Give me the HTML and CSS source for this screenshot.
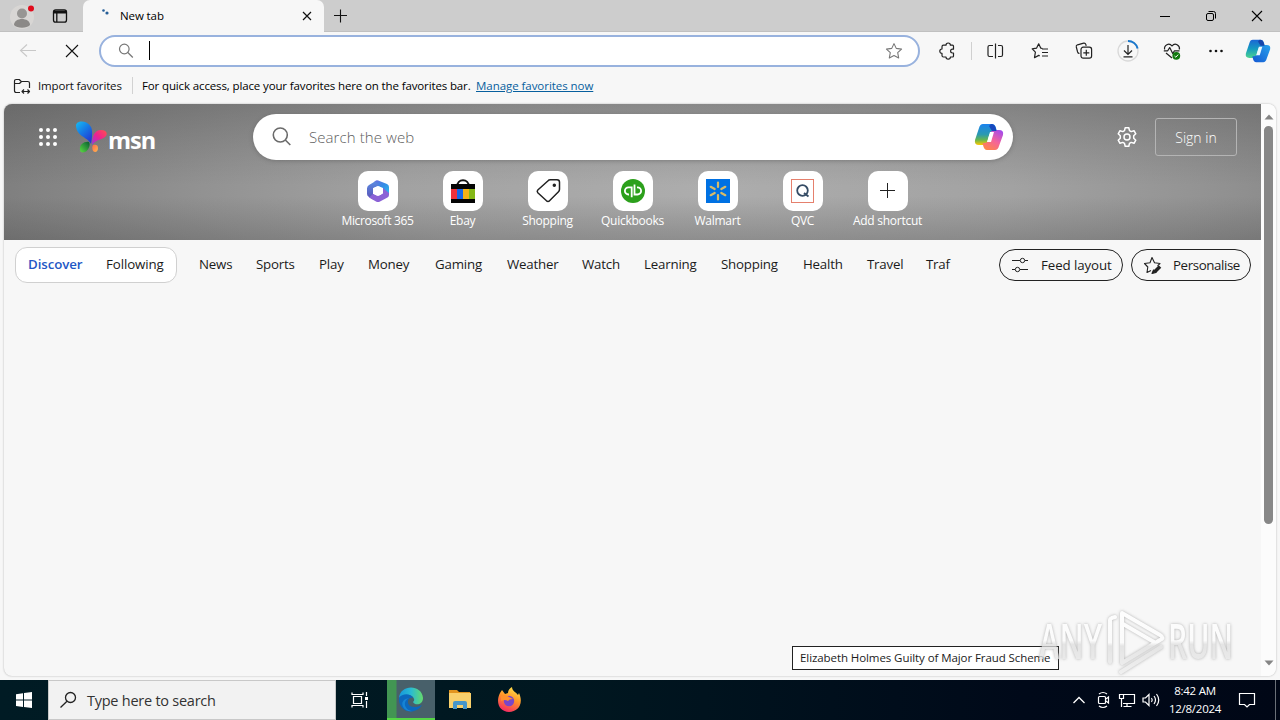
FILE: index.html
```
<!DOCTYPE html>
<html lang="en">
<head>
<meta charset="utf-8">
<title>New tab</title>
<link rel="stylesheet" href="styles.css">
</head>
<body>
<header class="tabstrip">
  <div class="profile"><svg width="30" height="30" viewBox="0 0 30 30"><circle cx="15" cy="16" r="12" fill="#d8d6d4"/><circle cx="15" cy="12.5" r="5" fill="#979593"/><path d="M7 24c0-8 16-8 16 0-3 3.5-13 3.5-16 0z" fill="#8b8987"/><circle cx="24" cy="7.500" r="3" fill="#e00b1c"/></svg></div>
  <div class="workspaces"><svg width="16" height="16" viewBox="0 0 16 16" fill="none" stroke="#111" stroke-width="1.3"><rect x="1.5" y="1.8" width="13" height="12.4" rx="2.2"/><path d="M2 4h12" stroke-width="3"/><path d="M4.8 5v9"/></svg></div>
  <div class="tab">
    <svg class="spinner" width="16" height="16" viewBox="0 0 16 16" fill="#275f98"><circle cx="4.5" cy="2.5" r="1.3"/><circle cx="8" cy="5" r="1.6"/></svg>
    <span class="tab-title">New tab</span>
    <svg class="tab-close" width="16" height="16" viewBox="0 0 16 16" stroke="#111" stroke-width="1.2"><path d="M4 4l8 8M12 4l-8 8"/></svg>
  </div>
  <div class="newtab"><svg width="16" height="16" viewBox="0 0 16 16" stroke="#111" stroke-width="1.1"><path d="M8.500 1.500v13M2 7.500h13"/></svg></div>
  <div class="winctl"><svg width="12" height="12" viewBox="0 0 12 12" stroke="#000"><path d="M1 6.5h10"/></svg></div>
  <div class="winctl"><svg width="12" height="12" viewBox="0 0 12 12" fill="none" stroke="#000"><rect x="1.5" y="3.5" width="7" height="7" rx="1.5"/><path d="M3.5 1.5h5q2 0 2 2v5"/></svg></div>
  <div class="winctl"><svg width="12" height="12" viewBox="0 0 12 12" stroke="#000" stroke-width="1.1"><path d="M1 1l10 10M11 1L1 11"/></svg></div>
</header>

<nav class="toolbar">
  <div class="tool"><svg width="20" height="20" viewBox="0 0 20 20" fill="none" stroke="#c8c8c8" stroke-width="1.1"><path d="M18 9.500H3M9 3.500l-6.500 6L9 15.500"/></svg></div>
  <div class="tool"><svg width="16" height="16" viewBox="0 0 16 16" stroke="#111" stroke-width="1.1"><path d="M2 2l12 12M14 2L2 14"/></svg></div>
  <div class="address">
    <svg width="16" height="16" viewBox="0 0 16 16" fill="none" stroke="#777" stroke-width="1.2"><circle cx="6.3" cy="6" r="4.8"/><path d="M9.8 9.5l5 5"/></svg>
    <span class="caret"></span>
    <svg class="fav-star" width="18" height="18" viewBox="0 0 20 20" fill="none" stroke="#777" stroke-width="1.2" stroke-linejoin="round"><path d="M10 1.8l2.5 5.3 5.9.8-4.3 4 1.1 5.8L10 15l-5.2 2.7 1.1-5.8-4.3-4 5.9-.8z"/></svg>
  </div>
  <div class="tool ext"><svg width="18" height="18" viewBox="0 0 18 18" fill="none" stroke="#222" stroke-width="1.2" stroke-linejoin="round"><path d="M5.500 3.200H8a2.200 2.200 0 0 1 4.400 0h2.100q1 0 1 1v3h-1a1.900 1.900 0 0 0 0 3.800h1v3q0 1-1 1h-2.100a2.200 2.200 0 0 1-4.400 0H5.500q-1.500 0-1.500-1.500v-2.100a2.200 2.200 0 0 1 0-4.400V4.700q0-1.500 1.500-1.500z"/></svg></div>
  <div class="sep"></div>
  <div class="tool"><svg width="18" height="18" viewBox="0 0 18 18" fill="none" stroke="#222" stroke-width="1.2"><path d="M9.500 1.500v15M7 3.500H3.500q-1.500 0-1.500 1.500v8q0 1.500 1.500 1.500H7M12 3.500h3q1.500 0 1.500 1.500v8q0 1.500-1.500 1.500h-3"/></svg></div>
  <div class="tool gap1"><svg width="18" height="18" viewBox="0 0 18 18" fill="none" stroke="#222" stroke-width="1.2" stroke-linejoin="round"><path d="M11.5 6.5L9.8 6.2 7.7 1.8 5.5 6.2l-4.3.7 3.2 3.2-.9 5.6 4.2-2.3 1 .5M11 7h6M11 10.5h6M11 14h6"/></svg></div>
  <div class="tool"><svg width="18" height="18" viewBox="0 0 18 18" fill="none" stroke="#222" stroke-width="1.2"><path d="M4.5 11.5Q3 11.4 2.6 10L1.3 5q-.4-1.700 1.200-2.200l6.200-1.600q1.600-.3 2.100 1.200l.4 1.400"/><rect x="6" y="5.2" width="10.6" height="11" rx="2.2"/><path d="M11.300 7.800v6M8.300 10.800h6"/></svg></div>
  <div class="tool"><svg width="24" height="24" viewBox="0 0 24 24" fill="none"><circle cx="12" cy="12" r="10" stroke="#d9d9d9" stroke-width="1.3"/><path d="M12 2a10 10 0 0 1 9.600 7.400" stroke="#1977cc" stroke-width="2"/><path d="M12 6v9M8 11.500l4 4 4-4M7.500 17.800h9" stroke="#222" stroke-width="1.2"/></svg></div>
  <div class="tool"><svg width="18" height="18" viewBox="0 0 18 18" fill="none" stroke="#222" stroke-width="1.2" stroke-linejoin="round"><path d="M1.600 7.500C.8 3.400 6 .2 9 4c3-3.800 8.200-.6 7.400 3.500M.8 8.800h3.900l2-3.200 3 6 1.800-2.800h5M3 11l6 5"/><circle cx="13.300" cy="13.800" r="3.900" fill="#11790f" stroke="none"/><path d="M11.500 14l1.300 1.200 2.400-2.600" stroke="#fff" stroke-width="1"/></svg></div>
  <div class="tool"><svg width="16" height="16" viewBox="0 0 16 16" fill="#111"><circle cx="2.500" cy="8" r="1.300"/><circle cx="8" cy="8" r="1.300"/><circle cx="13.500" cy="8" r="1.300"/></svg></div>
  <div class="copilot"><svg width="26" height="26" viewBox="0 0 30 30">
    <defs><linearGradient id="a1" x2="0" y2="1"><stop stop-color="#1b66d5"/><stop offset=".5" stop-color="#159bc0"/><stop offset="1" stop-color="#4dd390"/></linearGradient><linearGradient id="a2" x1="1" x2="0" y2="1"><stop stop-color="#27a2ec"/><stop offset="1" stop-color="#1457d2"/></linearGradient></defs>
    <path d="M9 2h9q3 0 4 4l1 4h-4q-3 0-4 4l-2 7q-1 2-3 2H5q-5 0-4-5L5 6q1-4 4-4z" fill="url(#a1)"/><path d="M21 28h-8q-3 0-4-5l-.5-2h2q3 0 4-3l2-7q1-3 4-3H25q5 0 4 5l-4 11q-1 4-4 4z" fill="url(#a2)"/><path d="M17 2q4 0 5 5l.5 2H18l-3-5z" fill="#1745aa"/><path d="M16 10h4l-3 10h-4z" fill="#e9f8ff"/></svg></div>
</nav>

<div class="favbar">
  <svg width="18" height="18" viewBox="0 0 18 18" fill="none" stroke="#222" stroke-width="1.200" stroke-linejoin="round"><path d="M7 15.500H3.200q-1.700 0-1.700-1.700V4.200q0-1.700 1.700-1.700h3l2 2h6.600q1.700 0 1.700 1.700V11M1.500 6.500h5l2-2M9 14.500h7.500M11 12.500l-2 2 2 2M14.500 12.500l2 2-2 2"/></svg>
  <span class="import">Import favorites</span>
  <span class="fsep"></span>
  <span class="hint">For quick access, place your favorites here on the favorites bar.</span>
  <a class="manage">Manage favorites now</a>
</div>

<main class="frame">
  <div class="content">
    <section class="hero">
      <div class="hero-top">
        <svg class="apps" width="24" height="24" viewBox="0 0 24 24" fill="#fff"><circle cx="5" cy="5" r="2"/><circle cx="12" cy="5" r="2"/><circle cx="19" cy="5" r="2"/><circle cx="5" cy="12" r="2"/><circle cx="12" cy="12" r="2"/><circle cx="19" cy="12" r="2"/><circle cx="5" cy="19" r="2"/><circle cx="12" cy="19" r="2"/><circle cx="19" cy="19" r="2"/></svg>
        <div class="msn"><svg width="31" height="32" viewBox="0 0 31 32">
          <defs><linearGradient id="b1" x2=".7" y2="1"><stop stop-color="#16bdf2"/><stop offset=".5" stop-color="#1679e5"/><stop offset="1" stop-color="#2337d2"/></linearGradient><linearGradient id="b2" x1="1" x2="0" y2="1"><stop stop-color="#ff514c"/><stop offset=".5" stop-color="#ee238f"/><stop offset="1" stop-color="#9736df"/></linearGradient><linearGradient id="b3" x1="1" x2="0" y2="1"><stop stop-color="#075b32"/><stop offset="1" stop-color="#5cdc42"/></linearGradient><linearGradient id="b4" x2="1" y2="1"><stop stop-color="#ff6848"/><stop offset="1" stop-color="#ffb94f"/></linearGradient></defs>
          <path d="M0 5C0-1 11-1 15 6c2 4 1 11 0 17C12 16 1 16 0 5z" fill="url(#b1)"/><path d="M16 24c0-8 2-15 9-15 5 0 7 3 5 6-3 4-10 3-14 9z" fill="url(#b2)"/><path d="M4 29c-1-6 5-9 9-8 2 3-1 9-4 10-3 1-5 0-5-2z" fill="url(#b3)"/><path d="M17 24c3-1 5 0 5 3 0 4-3 5-5 3-1-2-1-5 0-6z" fill="url(#b4)"/></svg><span>msn</span></div>
        <div class="search">
          <svg width="24" height="24" viewBox="0 0 24 24" fill="none" stroke="#6b6b6b" stroke-width="1.600"><circle cx="10.300" cy="10" r="7"/><path d="M15.300 15l5 5"/></svg>
          <span class="search-text">Search the web</span>
          <svg class="search-copilot" width="32" height="30" viewBox="0 0 30 30">
            <defs><linearGradient id="c1" x2="0" y2="1"><stop stop-color="#1b83ef"/><stop offset=".5" stop-color="#2b9ab0"/><stop offset=".75" stop-color="#65b651"/><stop offset="1" stop-color="#ffc800"/></linearGradient><linearGradient id="c2" x1=".8" x2=".2" y2="1"><stop stop-color="#a64bea"/><stop offset=".5" stop-color="#f4649a"/><stop offset="1" stop-color="#ff8746"/></linearGradient></defs>
            <path d="M9 2h9q3 0 4 4l1 4h-4q-3 0-4 4l-2 7q-1 2-3 2H5q-5 0-4-5L5 6q1-4 4-4z" fill="url(#c1)"/><path d="M21 28h-8q-3 0-4-5l-.5-2h2q3 0 4-3l2-7q1-3 4-3H25q5 0 4 5l-4 11q-1 4-4 4z" fill="url(#c2)"/><path d="M17 2q4 0 5 5l.5 2H18l-3-5z" fill="#1748bd"/><path d="M16 10h4l-3 10h-4z" fill="#fff"/></svg>
        </div>
        <svg class="gear" width="24" height="24" viewBox="0 0 24 24" fill="none" stroke="#fff" stroke-width="1.500" stroke-linejoin="round"><path d="M10.200 2.800h3.600l.7 2.800 1.700 1 2.800-.9 1.800 3.100-2.100 2v2.400l2.100 2-1.800 3.100-2.800-.9-1.700 1-.7 2.800h-3.600l-.7-2.800-1.700-1-2.800.9-1.800-3.100 2.100-2v-2.400l-2.100-2L5 5.700l2.800.9 1.700-1z"/><circle cx="12" cy="12" r="3"/></svg>
        <div class="signin">Sign in</div>
      </div>
      <div class="shortcuts">
        <div class="shortcut"><div class="tile"><svg width="24" height="24" viewBox="0 0 24 24"><defs><linearGradient id="m1" x2="1" y2="1"><stop stop-color="#7769dc"/><stop offset=".5" stop-color="#348de6"/><stop offset="1" stop-color="#2dbded"/></linearGradient><linearGradient id="m2" y2="1" x2="0"><stop stop-color="#5a8be0"/><stop offset="1" stop-color="#5b4fb5"/></linearGradient></defs><path d="M10 1.500q1-.6 2.200 0L21 5q2 1 2 3v8l-6-4V9l-5-2-6 2 2-6z" fill="url(#m1)"/><path d="M9 2.500L3 6Q1 7 1 9.500V15q0 2 2 3l5 3 2-4-3-2V9l6-3z" fill="url(#m2)"/><path d="M17 9l6 5v2q0 1.500-1.500 2.500L14 22.500q-2 1-4 0l-7-4 4-3.500 5 2 5-2.500z" fill="#8b62d6"/><circle cx="12" cy="12" r="4.500" fill="#fff"/></svg></div><span class="label ms">Microsoft 365</span></div>
        <div class="shortcut"><div class="tile"><svg width="24" height="26" viewBox="0 0 24 26"><path d="M6 9c0-9 12-9 12 0" fill="none" stroke="#111" stroke-width="2"/><path fill="#050505" d="M0 6h24v19H0z"/><path fill="#f0313b" d="M0 11h6v10H0z"/><path fill="#1767e8" d="M6 11h6v10H6z"/><path fill="#f5b316" d="M12 11h6v10h-6z"/><path fill="#84b817" d="M18 11h6v10h-6z"/></svg></div><span class="label">Ebay</span></div>
        <div class="shortcut"><div class="tile"><svg width="26" height="26" viewBox="0 0 26 26" fill="none" stroke="#222" stroke-width="1.500" stroke-linejoin="round"><path d="M15.500 1.800H22q2.500 0 2.500 2.500v7q0 1.500-1 2.500l-9 9q-1.500 1.200-3 0l-8.700-8q-1.200-1.500 0-2.800l10-9q1-1.200 2.700-1.200z"/><circle cx="19.300" cy="7.300" r="1" fill="#222"/></svg></div><span class="label">Shopping</span></div>
        <div class="shortcut"><div class="tile"><svg width="24" height="24" viewBox="0 0 24 24" fill="none" stroke="#fff" stroke-width="1.800"><circle cx="12" cy="12" r="12" fill="#2ca01c" stroke="none"/><path d="M8 15.500H7.500a3.600 3.600 0 0 1 0-7.200h3.200v10M16 15.500h.5a3.600 3.600 0 0 0 0-7.200H16M13.500 5.500v10h2.700"/></svg></div><span class="label">Quickbooks</span></div>
        <div class="shortcut"><div class="tile"><svg width="24" height="24" viewBox="0 0 24 24" stroke="#d7bb68" stroke-width="2.200" stroke-linecap="round"><path fill="#0071e3" stroke="none" d="M0 0h24v24H0z"/><path d="M12 3.500V8M12 16v4.500M4.700 7.800l4 2.200M15.300 14l4 2.200M4.700 16.200l4-2.200M15.300 10l4-2.200"/></svg></div><span class="label">Walmart</span></div>
        <div class="shortcut"><div class="tile"><svg width="24" height="24" viewBox="0 0 24 24" fill="none"><rect x=".5" y=".5" width="22" height="23" stroke="#e5806d"/><circle cx="11.500" cy="11.500" r="5.300" stroke="#354c65" stroke-width="1.800"/><path d="M13 14l4.500 3.500" stroke="#354c65" stroke-width="1.800"/></svg></div><span class="label">QVC</span></div>
        <div class="shortcut"><div class="tile"><svg width="16" height="16" viewBox="0 0 16 16" stroke="#222"><path d="M7.500 0v15M0 7.500h15"/></svg></div><span class="label">Add shortcut</span></div>
      </div>
    </section>
    <section class="feed-nav">
      <div class="switch"><span class="discover">Discover</span><span class="following">Following</span></div>
      <div class="topics"><span>News</span><span>Sports</span><span>Play</span><span>Money</span><span>Gaming</span><span>Weather</span><span>Watch</span><span>Learning</span><span>Shopping</span><span>Health</span><span>Travel</span><span>Traf</span></div>
      <div class="pill layout"><svg width="20" height="20" viewBox="0 0 20 20" fill="none" stroke="#222"><path d="M2 5.500h8M15 5.500h3M2 14.500h3M10 14.500h8"/><circle cx="12.500" cy="5.500" r="2.200"/><circle cx="7.500" cy="14.500" r="2.200"/></svg><span>Feed layout</span></div>
      <div class="pill personal"><svg width="20" height="20" viewBox="0 0 20 20" fill="none" stroke="#222" stroke-width="1.100" stroke-linejoin="round"><path d="M9 15.500L5 17.500l.8-5.500L2.500 8.500 8 7.700l2-5.200 2.500 5.200 5.500.8-2.500 2.300"/><path d="M18 11.500l-5 5" stroke-width="3.500"/><path d="M11.500 15l-1.500 3.500 4-1z" fill="#222"/></svg><span>Personalise</span></div>
    </section>
  </div>
  <div class="scrollbar"><svg width="12" height="8" viewBox="0 0 12 8"><path fill="#858585" d="M1.500 6.500l4.500-5 4.500 5z"/></svg><div class="thumb"></div><svg width="12" height="8" viewBox="0 0 12 8"><path fill="#858585" d="M1.500 1.500h9L6 6.500z"/></svg></div>
</main>

<div class="tooltip">Elizabeth Holmes Guilty of Major Fraud Scheme</div>

<svg class="watermark" width="240" height="70" viewBox="0 0 240 70">
  <defs><linearGradient id="w" x2="0" y2="1"><stop stop-color="#fff"/><stop offset=".5" stop-color="#fdfdfd"/><stop offset=".56" stop-color="#dedede"/><stop offset="1" stop-color="#ededed"/></linearGradient></defs>
  <g class="wm-text"><text x="3" y="53" textLength="63" lengthAdjust="spacingAndGlyphs">ANY</text><text x="132" y="53" textLength="65" lengthAdjust="spacingAndGlyphs">RUN</text></g>
  <path class="wm-mark" d="M74 56V14q0-2 5-3M86 46V7l38 22q5 3 0 5L86 57zM87 18l31 18M85 66l40-25"/>
</svg>

<footer class="taskbar">
  <div class="start"><svg width="16" height="16" viewBox="0 0 16 16" fill="#fff"><path d="M0 2.200l7-1v6.400H0zM8 1.100L16 0v7.600H8zM0 8.500h7v6.400l-7-1zM8 8.500h8V16l-8-1.100z"/></svg></div>
  <div class="tb-search"><svg width="18" height="18" viewBox="0 0 18 18" fill="none" stroke="#222" stroke-width="1.300"><circle cx="10.500" cy="6.500" r="5"/><path d="M7 10.200l-6.500 6.300"/></svg><span>Type here to search</span></div>
  <div class="taskview"><svg width="18" height="18" viewBox="0 0 18 18" fill="none" stroke="#fff" stroke-width="1.200"><path d="M1 1.500v2h11v-2M1 16.500v-2h11v2M2.500 5.500h8v7h-8zM15.500 1v4M15.500 10v7"/><path d="M14 6h3v3h-3z" fill="#fff" stroke="none"/></svg></div>
  <div class="tb-app active"><svg width="26" height="26" viewBox="0 0 26 26"><defs><linearGradient id="e1" x2="1"><stop stop-color="#1697dc"/><stop offset=".5" stop-color="#2abbd2"/><stop offset="1" stop-color="#65db6c"/></linearGradient></defs><path d="M1 12C2-2 24-2 25 12c0 7-8 8-10 4 3-2 0-7-5-7-4 0-8 2-9 3z" fill="url(#e1)"/><path d="M1 12c3-5 12-5 14 0-5-2-7 5-3 8 4 2 8 1 12-1C16 31 0 25 1 12z" fill="#0c68bd"/><path d="M11 12c-8 4-3 13 3 13-9 2-15-11-3-13z" fill="#1684d4"/></svg></div>
  <div class="tb-app"><svg width="24" height="22" viewBox="0 0 24 22"><path fill="#e2951f" d="M1 1h8l2 2h11v15H1z"/><path fill="#f9d06b" d="M1 4h22v15H1z"/><path fill="#4796c9" d="M5 20v-6q0-2 2-2h10q2 0 2 2v6h-4v-4H9v4z"/></svg></div>
  <div class="tb-app"><svg width="26" height="26" viewBox="0 0 26 26"><defs><linearGradient id="f1" x1=".7" x2=".3" y2="1"><stop stop-color="#ffe34c"/><stop offset=".45" stop-color="#ff9528"/><stop offset="1" stop-color="#f52666"/></linearGradient></defs><path d="M4 6l2-3 3 4 3-1c0-3 2-5 4-6 0 4 4 5 6 8l1-2c5 11-1 19-10 19S-1 16 4 6z" fill="url(#f1)"/><circle cx="13" cy="14" r="5.200" fill="#7a46c9"/><path d="M5 9q5-2 8 1l4 2q-4 0-5 2-3-2-7 0z" fill="#ff912c"/></svg></div>
  <div class="tray">
    <svg width="24" height="20" viewBox="0 0 24 20" fill="none" stroke="#fff" stroke-width="1.300"><path d="M6.500 13l5.500-5.500 5.500 5.500"/></svg>
    <svg width="24" height="20" viewBox="0 0 24 20" fill="none" stroke="#fff" stroke-width="1.200"><rect x="7.500" y="6.500" width="7" height="7" rx="1"/><path d="M15 9l2.500-2v6L15 11M8 4q4-3 8 0M8 16q4 3 8 0"/></svg>
    <svg width="24" height="20" viewBox="0 0 24 20" fill="none" stroke="#fff" stroke-width="1.200"><path d="M9 4.500h10.500v9H8M12 14v3M8.500 16.500h8M4.500 4.500h4v4h-4zM6.500 9v8"/></svg>
    <svg width="24" height="20" viewBox="0 0 24 20" fill="none" stroke="#fff" stroke-width="1.200"><path d="M4 8h2.500L10 4.500v11L6.500 12H4zM12.500 8q1.500 2 0 4M15 6q3 4 0 8M17.500 4q4.500 6 0 12"/></svg>
    <div class="clock"><span>8:42 AM</span><span>12/8/2024</span></div>
    <svg class="notify" width="18" height="18" viewBox="0 0 18 18" fill="none" stroke="#fff" stroke-width="1.200"><path d="M1.500 2.500h15v11h-5L9 16l-2.500-2.500h-5z"/></svg>
    <div class="desktop-edge"></div>
  </div>
</footer>
</body>
</html>
```
FILE: styles.css
```
* { box-sizing: border-box; }
body { margin: 0; width: 1280px; height: 720px; overflow: hidden; position: relative; display: flex; flex-direction: column; background: #f7f7f7; font-family: "Open Sans", "Noto Sans", sans-serif; color: #1b1b1b; white-space: nowrap; }
svg { display: block; flex: none; }
.tabstrip { height: 32px; flex: none; display: flex; align-items: center; background: #cdcdcd; border-bottom: 1px solid #c0c0c0; }
.profile { width: 44px; display: flex; justify-content: center; }
.workspaces { width: 32px; display: flex; justify-content: center; }
.tab { align-self: stretch; width: 241px; margin: 0 0 -1px 7px; display: flex; align-items: center; background: #f7f7f7; border-radius: 7px 7px 0 0; padding: 0 9px 0 16px; }
.spinner { align-self: flex-start; margin-top: 8px; }
.tab-title { font-size: 11.5px; margin-left: 5px; padding-bottom: 2px; color: #000; letter-spacing: -.1px; }
.tab-close { margin-left: auto; }
.newtab { margin: 0 auto 0 8px; }
.winctl { width: 46px; display: flex; justify-content: center; }
.toolbar { height: 38px; flex: none; display: flex; align-items: center; padding-left: 6px; }
.tool { width: 44px; display: flex; justify-content: center; }
.address { width: 821px; height: 32px; margin-left: 5px; border: 2px solid #98b2de; border-radius: 16px; background: #fff; display: flex; align-items: center; padding: 0 15px 0 17px; }
.caret { width: 1px; height: 19px; background: #000; margin: 0 0 1px 15px; }
.fav-star { margin-left: auto; }
.ext { margin-left: 5px; }
.sep { width: 1px; height: 18px; background: #d0d0d0; margin: 0 1px 0 2px; }
.gap1 { margin-left: 1px; }
.copilot { width: 40px; display: flex; justify-content: center; }
.favbar { height: 34px; flex: none; display: flex; align-items: center; padding: 0 0 3px 13px; font-size: 11.5px; color: #111; }
.import { width: 84px; margin-left: 7px; letter-spacing: -.15px; }
.fsep { width: 1px; height: 17px; background: #d2d2d2; margin: 0 9px 0 10px; }
.hint { width: 334px; letter-spacing: -.13px; color: #000; }
.manage { color: #075f9e; text-decoration: underline; letter-spacing: -.05px; }
.frame { height: 572px; flex: none; margin: 0 4px 4px; display: flex; border-radius: 8px; overflow: hidden; box-shadow: 0 0 2px #aaa; background: #f7f7f7; }
.content { width: 1257px; flex: none; }
.hero { height: 136px; padding-top: 10px; background: linear-gradient(0deg, rgba(50,50,50,.22), transparent 32%), linear-gradient(180deg, rgba(50,50,50,.24), transparent 60%), radial-gradient(ellipse 760px 260px at 56% 62%, #adadad, #a2a2a2 40%, #939393 65%, #7a7a7a 100%); }
.hero-top { height: 46px; display: flex; align-items: center; padding: 0 24px 0 32px; }
.msn { width: 79px; margin-left: 16px; display: flex; align-items: center; color: #fff; }
.msn span { font: 700 23.5px/32px "Open Sans", sans-serif; letter-spacing: -1px; margin: 5px 0 0 1px; }
.search { width: 760px; height: 46px; margin-left: 98px; border-radius: 23px; background: #fff; display: flex; align-items: center; padding: 0 8px 0 17px; box-shadow: 0 1px 4px #5557; }
.search-text { font-size: 15px; color: #606060; margin-left: 15px; font-weight: 300; letter-spacing: .08px; }
.search-copilot { margin-left: auto; }
.gear { margin-left: auto; }
.signin { width: 82px; height: 38px; margin-left: 16px; border: 1px solid #b4b4b4; border-radius: 3px; display: flex; align-items: center; justify-content: center; color: #fff; font-size: 14px; font-weight: 300; }
.shortcuts { display: flex; justify-content: center; padding-top: 11px; }
.shortcut { width: 85px; display: flex; flex-direction: column; align-items: center; }
.tile { width: 40px; height: 40px; border-radius: 10px; background: #fff; display: flex; align-items: center; justify-content: center; }
.label { color: #fff; font-size: 12px; line-height: 20px; letter-spacing: -.27px; }
.ms { letter-spacing: -.35px; }
.feed-nav { height: 49px; display: flex; align-items: center; padding: 0 10px 0 11px; font-size: 13.3px; }
.switch { width: 162px; height: 36px; background: #fff; border: 1px solid #d0d0d0; border-radius: 12px; padding: 0 0 2px 12px; display: flex; align-items: center; }
.discover { width: 78px; font-weight: 600; color: #2357c5; letter-spacing: -.1px; }
.following { letter-spacing: -.1px; }
.topics { width: 751px; margin-left: 22px; padding-bottom: 2px; display: grid; grid-template-columns: 33px 39px 25px 43px 48px 51px 38px 53px 58px 40px 35px 25px; gap: 24px; letter-spacing: -.2px; }
.pill { height: 32px; border: 1px solid #222; border-radius: 16px; display: flex; align-items: center; padding-left: 10px; }
.pill span { margin-left: 11px; letter-spacing: -.1px; }
.layout { width: 124px; margin-left: auto; }
.personal { width: 120px; margin-left: 8px; }
.personal span { letter-spacing: -.4px; }
.scrollbar { width: 15px; background: #fcfcfc; display: flex; flex-direction: column; align-items: center; padding: 9px 0; }
.thumb { width: 9px; height: 398px; margin: 5px 0 auto; background: #878787; border-radius: 5px; }
.tooltip { position: absolute; left: 792px; top: 646px; width: 267px; height: 24px; border: 1px solid #222; background: #fff; font-size: 11.5px; line-height: 22px; padding-left: 7px; letter-spacing: -.08px; }
.watermark { position: absolute; left: 1036px; top: 606px; filter: drop-shadow(0 0 1.5px #999); opacity: .75; }
.wm-text { font: 600 48px "Open Sans", sans-serif; fill: url(#w); }
.wm-mark { fill: none; stroke: url(#w); stroke-width: 4; stroke-linejoin: round; stroke-linecap: round; }
.taskbar { height: 40px; flex: none; display: flex; align-items: center; background: linear-gradient(90deg, #001b24, #001720 45%, #000919 80%, #000716); }
.start { width: 48px; display: flex; justify-content: center; }
.tb-search { width: 288px; height: 40px; background: #f2f2f2; border: 1px solid #c8c8c8; display: flex; align-items: center; padding-left: 11px; color: #333; font-size: 14.5px; }
.tb-search span { margin-left: 9px; letter-spacing: -.25px; }
.taskview { width: 51px; padding-left: 15px; }
.tb-app { width: 49px; height: 40px; display: flex; align-items: center; justify-content: center; }
.active { width: 48px; background: linear-gradient(90deg, #429553 0 9px, #48606a 10px); border-bottom: 2px solid #55d646; }
.tray { margin-left: auto; height: 40px; display: flex; align-items: center; color: #fff; }
.clock { width: 64px; display: flex; flex-direction: column; align-items: center; font-size: 11.5px; line-height: 18px; letter-spacing: -.25px; }
.notify { margin-left: 11px; }
.desktop-edge { width: 1px; height: 40px; background: #6a7078; margin: 0 4px 0 19px; }
```
